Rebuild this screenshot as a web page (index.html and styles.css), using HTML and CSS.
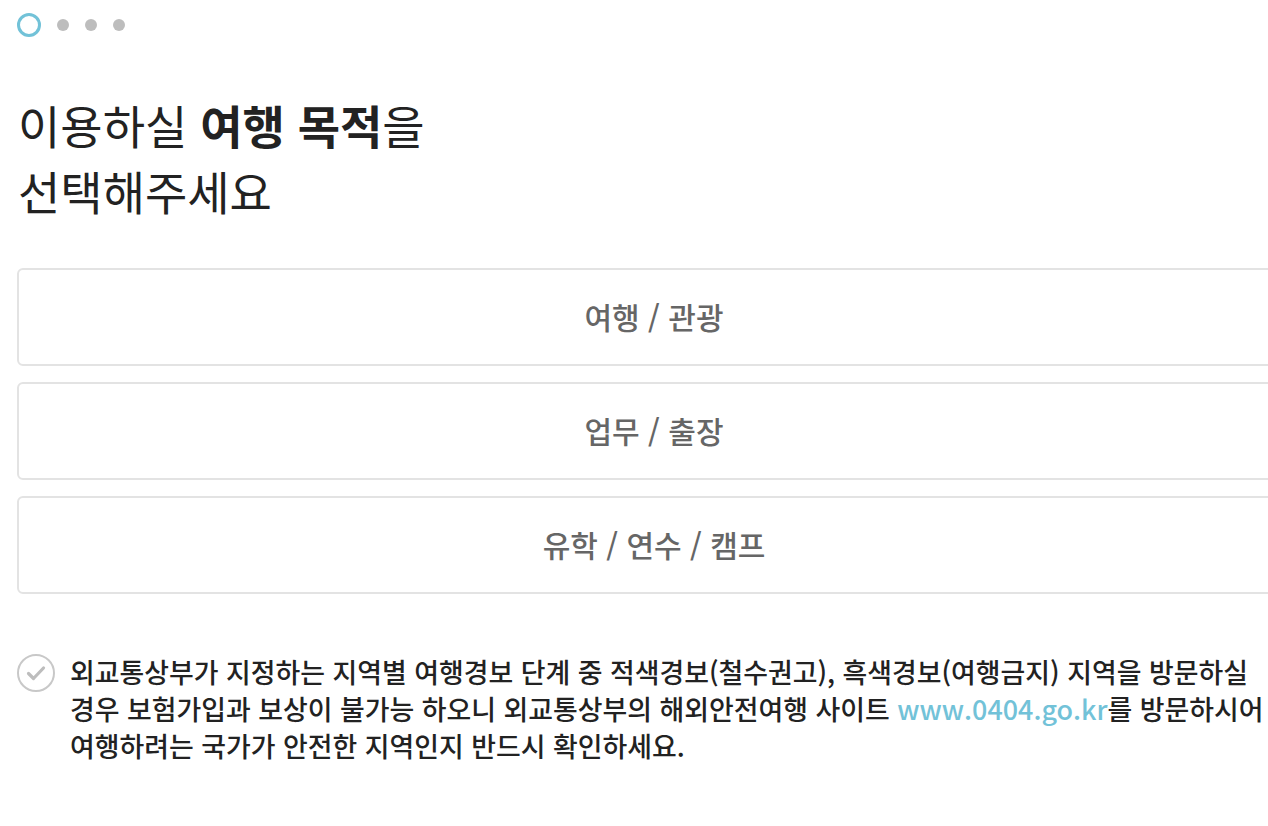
FILE: index.html
```html
<!DOCTYPE html>
<html lang="ko">
<head>
<meta charset="utf-8">
<title>여행 목적 선택</title>
<link rel="stylesheet" href="styles.css">
</head>
<body>
<div class="page">
  <div class="steps">
    <span class="step step-active"></span>
    <span class="step"></span>
    <span class="step"></span>
    <span class="step"></span>
  </div>
  <h1 class="title">이용하실 <strong>여행 목적</strong>을<br>선택해주세요</h1>
  <div class="options">
    <button class="option">여행 / 관광</button>
    <button class="option">업무 / 출장</button>
    <button class="option">유학 / 연수 / 캠프</button>
  </div>
  <div class="notice">
    <span class="check">
      <svg width="38" height="38" viewBox="0 0 38 38">
        <circle cx="19" cy="19" r="18" fill="none" stroke="#c8c8c8" stroke-width="2"/>
        <path d="M11.5 19.5 L16.5 24.5 L26.5 14" fill="none" stroke="#bdbdbd" stroke-width="3.2" stroke-linecap="round" stroke-linejoin="round"/>
      </svg>
    </span>
    <p class="notice-text">외교통상부가 지정하는 지역별 여행경보 단계 중 적색경보(철수권고), 흑색경보(여행금지) 지역을 방문하실 경우 보험가입과 보상이 불가능 하오니 외교통상부의 해외안전여행 사이트 <a class="link" href="#">www.0404.go.kr</a>를 방문하시어 여행하려는 국가가 안전한 지역인지 반드시 확인하세요.</p>
  </div>
</div>
</body>
</html>
```

FILE: styles.css
```css
html, body {
  margin: 0;
  padding: 0;
  overflow: hidden;
  background: #fff;
}
body {
  font-family: "Noto Sans CJK KR", "Noto Sans", sans-serif;
  color: #222;
}
.page {
  width: 1274px;
  padding: 0 0 0 17px;
}
.steps {
  display: flex;
  align-items: center;
  gap: 16px;
  height: 24px;
  padding-top: 13px;
}
.step {
  width: 12px;
  height: 12px;
  border-radius: 50%;
  background: #bdbdbd;
}
.step-active {
  width: 24px;
  height: 24px;
  box-sizing: border-box;
  border: 3px solid #72c2d8;
  background: #fff;
}
.title {
  margin: 54px 0 0 1px;
  font-size: 46px;
  font-weight: 400;
  line-height: 66px;
  color: #222;
}
.title strong {
  font-weight: 700;
}
.options {
  display: flex;
  flex-direction: column;
  gap: 16px;
  margin-top: 45px;
}
.option {
  display: block;
  width: 100%;
  height: 98px;
  box-sizing: border-box;
  border: 2px solid #e3e3e3;
  border-radius: 6px;
  background: #fff;
  font-family: inherit;
  font-size: 30px;
  font-weight: 500;
  color: #666;
  text-align: center;
  padding: 0 0 2px;
}
.notice {
  display: flex;
  align-items: flex-start;
  gap: 15px;
  margin-top: 59px;
}
.check {
  flex: none;
  width: 38px;
  height: 38px;
  margin-top: 1px;
}
.check svg {
  display: block;
}
.notice-text {
  margin: 0;
  width: 1204px;
  font-size: 26.9px;
  font-weight: 500;
  line-height: 37px;
  color: #222;
  word-break: keep-all;
}
.link {
  color: #72c2d8;
  text-decoration: none;
}
```
